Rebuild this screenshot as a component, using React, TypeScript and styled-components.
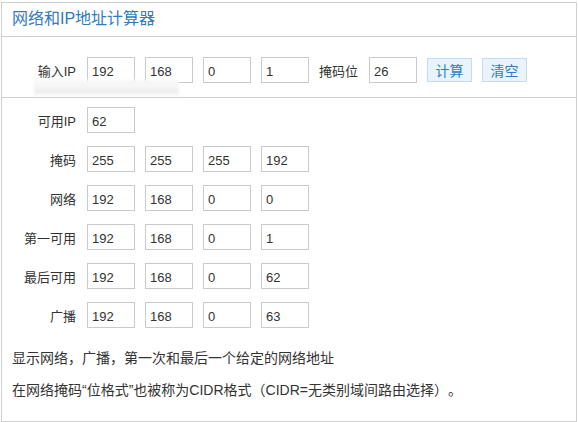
import styled, { createGlobalStyle } from "styled-components";

const GlobalStyle = createGlobalStyle`
  body {
    margin: 0;
    background: #fff;
    font-family: "Liberation Sans", "Noto Sans CJK SC", sans-serif;
    color: #333;
  }
`;

const resultRows = [
  { label: "可用IP", values: ["62"] },
  { label: "掩码", values: ["255", "255", "255", "192"] },
  { label: "网络", values: ["192", "168", "0", "0"] },
  { label: "第一可用", values: ["192", "168", "0", "1"] },
  { label: "最后可用", values: ["192", "168", "0", "62"] },
  { label: "广播", values: ["192", "168", "0", "63"] },
];

const App = () => {
  return (
    <>
      <GlobalStyle />
      <Panel>
        <Header>
          <Title>网络和IP地址计算器</Title>
        </Header>
        <InputSection>
          <FieldRow>
            <Label>输入IP</Label>
            <Octets>
              {["192", "168", "0", "1"].map((v, i) => (
                <Field key={i} value={v} readOnly />
              ))}
            </Octets>
            <MaskLabel>掩码位</MaskLabel>
            <Field value="26" readOnly />
            <Buttons>
              <ActionButton>计算</ActionButton>
              <ActionButton>清空</ActionButton>
            </Buttons>
          </FieldRow>
          <Smudge />
        </InputSection>
        <ResultSection>
          <RowList>
            {resultRows.map((row) => (
              <FieldRow key={row.label}>
                <Label>{row.label}</Label>
                <Octets>
                  {row.values.map((v, i) => (
                    <Field key={i} value={v} readOnly />
                  ))}
                </Octets>
              </FieldRow>
            ))}
          </RowList>
          <Notes>
            <Note>显示网络，广播，第一次和最后一个给定的网络地址</Note>
            <Note>在网络掩码“位格式”也被称为CIDR格式（CIDR=无类别域间路由选择）。</Note>
          </Notes>
        </ResultSection>
      </Panel>
    </>
  );
};

export default App;

const Panel = styled.div`
  box-sizing: border-box;
  margin: 2px 0 0 1px;
  width: 576px;
  height: 420px;
  border: 1px solid #cfcfcf;
  background: #fff;
`;

const Header = styled.div`
  height: 33px;
  padding-left: 10px;
  display: flex;
  align-items: center;
  border-bottom: 1px solid #cfcfcf;
`;

const Title = styled.span`
  font-size: 16px;
  color: #2f7bbf;
  line-height: 1;
  margin-top: -1px;
`;

const InputSection = styled.div`
  position: relative;
  box-sizing: border-box;
  height: 61px;
  padding-top: 20px;
  border-bottom: 1px solid #cfcfcf;
`;

const Smudge = styled.div`
  position: absolute;
  left: 32px;
  top: 43px;
  width: 145px;
  height: 15px;
  background: linear-gradient(
    to bottom,
    #f8f8f8 0%,
    #f4f4f4 55%,
    #ebebeb 75%,
    #f6f6f6 100%
  );
  filter: blur(1.5px);
`;

const FieldRow = styled.div`
  display: flex;
  align-items: center;
  height: 26px;
`;

const Label = styled.span`
  width: 74px;
  margin-right: 11px;
  text-align: right;
  font-size: 13px;
  color: #333;
`;

const Octets = styled.div`
  display: flex;
  gap: 10px;
`;

const Field = styled.input`
  box-sizing: border-box;
  width: 48px;
  height: 26px;
  margin: 0;
  padding: 2px 0 0 4px;
  border: 1px solid #cacaca;
  border-radius: 0;
  outline: none;
  background: #fff;
  font-family: "Liberation Sans", sans-serif;
  font-size: 13px;
  color: #333;
`;

const MaskLabel = styled.span`
  margin: 0 11px 0 10px;
  font-size: 13px;
  color: #333;
`;

const Buttons = styled.div`
  display: flex;
  gap: 10px;
  margin-left: 10px;
`;

const ActionButton = styled.button`
  box-sizing: border-box;
  width: 45px;
  height: 24px;
  padding: 0;
  border: 1px solid #c6dbee;
  background: #e9f3fc;
  color: #2d7cc1;
  font-family: "Liberation Sans", "Noto Sans CJK SC", sans-serif;
  font-size: 14px;
  cursor: pointer;
`;

const ResultSection = styled.div`
  padding-top: 9px;
`;

const RowList = styled.div`
  display: flex;
  flex-direction: column;
  gap: 13px;
`;

const Notes = styled.div`
  display: flex;
  flex-direction: column;
  gap: 12px;
  margin-top: 20px;
  padding-left: 10px;
`;

const Note = styled.p`
  margin: 0;
  font-size: 14px;
  line-height: 20px;
  color: #333;
  text-spacing-trim: space-all;
`;
